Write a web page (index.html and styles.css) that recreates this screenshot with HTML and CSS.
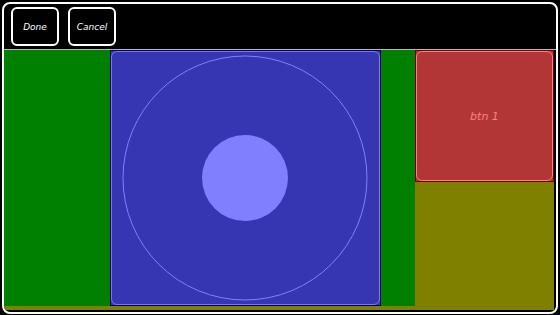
FILE: index.html
```html
<!DOCTYPE html>
<html>
<head>
<meta charset="utf-8">
<link rel="stylesheet" href="styles.css">
</head>
<body>
<div class="frame">
  <div class="topbar">
    <div class="tbtn">Done</div>
    <div class="tbtn">Cancel</div>
  </div>
  <div class="content">
    <div class="left">
      <div class="pad">
        <svg class="joy" width="265" height="250" viewBox="0 0 265 250">
          <circle cx="132" cy="125" r="122" fill="none" stroke="#8080ff" stroke-width="1"/>
          <circle cx="132" cy="125" r="43" fill="#8080ff"/>
        </svg>
      </div>
    </div>
    <div class="right">
      <div class="btn1"><span>btn 1</span></div>
    </div>
  </div>
</div>
</body>
</html>
```
FILE: styles.css
```css
html, body {
  margin: 0;
  padding: 0;
  background: #000;
}
body {
  width: 560px;
  height: 315px;
  overflow: hidden;
}
.frame {
  margin: 2px;
  width: 556px;
  height: 312px;
  box-sizing: border-box;
  border: 2px solid #fff;
  border-radius: 8px;
  background: #000;
  overflow: hidden;
  display: flex;
  flex-direction: column;
}
.topbar {
  height: 46px;
  box-sizing: border-box;
  padding: 3px 7px 0;
  display: flex;
  gap: 9px;
  border-bottom: 1px solid #b8b8b8;
}
.tbtn {
  width: 48px;
  height: 39px;
  box-sizing: border-box;
  border: 2px solid #fff;
  border-radius: 6px;
  color: #fff;
  font-family: "DejaVu Sans", sans-serif;
  font-style: italic;
  font-size: 9px;
  display: flex;
  align-items: center;
  justify-content: center;
}
.content {
  height: 260px;
  margin-right: 2px;
  background: #808000;
  display: flex;
  align-items: flex-start;
}
.left {
  width: 411px;
  height: 256px;
  background: #008000;
  box-sizing: border-box;
  padding-left: 106px;
}
.pad {
  width: 271px;
  height: 256px;
  box-sizing: border-box;
  border: 1px solid #000060;
  background: #3636b3;
  position: relative;
  display: flex;
  align-items: center;
  justify-content: center;
}
.pad::before {
  content: "";
  position: absolute;
  inset: 0;
  border: 1.5px solid #7878ff;
  border-radius: 6px;
}
.joy {
  display: block;
}
.right {
  flex: 1;
}
.btn1 {
  height: 132px;
  box-sizing: border-box;
  border: 1px solid #700000;
  background: #b33636;
  position: relative;
  display: flex;
  align-items: center;
  justify-content: center;
}
.btn1::before {
  content: "";
  position: absolute;
  inset: 0;
  border: 1.5px solid #ff8080;
  border-radius: 6px;
}
.btn1 span {
  color: #ff8080;
  font-family: "DejaVu Sans", sans-serif;
  font-style: italic;
  font-size: 11px;
}
```
